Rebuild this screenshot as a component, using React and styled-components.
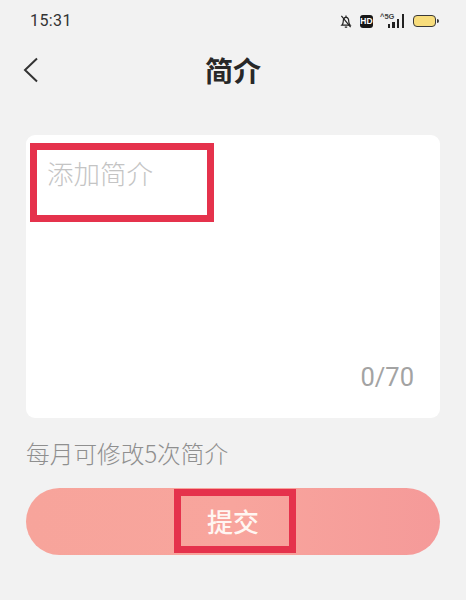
import styled, { createGlobalStyle } from 'styled-components';

const CJK = `"Noto Sans CJK SC", "Noto Sans", sans-serif`;

const GlobalStyle = createGlobalStyle`
  html, body {
    margin: 0;
    background: #f2f2f2;
    font-family: ${CJK};
  }
`;

const Page = styled.div`
  width: 466px;
  height: 600px;
  overflow: hidden;
  background: #f2f2f2;
  display: flex;
  flex-direction: column;
`;

const StatusBar = styled.div`
  height: 40px;
  padding: 0 28px 0 30px;
  display: flex;
  align-items: center;
  justify-content: space-between;
  box-sizing: border-box;
`;

const Clock = styled.span`
  font-family: Roboto, sans-serif;
  font-size: 16px;
  letter-spacing: 0.4px;
  color: #333;
`;

const StatusIcons = styled.div`
  display: flex;
  align-items: center;
  gap: 7px;
  padding-top: 2px;
`;

const HdBadge = styled.span`
  width: 13px;
  height: 13px;
  border-radius: 3px;
  background: #161616;
  color: #fff;
  font: 700 8.5px/13px "Liberation Sans", sans-serif;
  text-align: center;
`;

const Signal = styled.div`
  position: relative;
  width: 24px;
  height: 14px;
  display: flex;
  justify-content: flex-end;
  align-items: flex-end;
  gap: 2.5px;
`;

const SignalLabel = styled.span`
  position: absolute;
  left: 0;
  top: -1px;
  font: 700 7.5px/8px "Liberation Sans", sans-serif;
  color: #444;
`;

const SignalBar = styled.i`
  display: block;
  width: 2.2px;
  height: ${(p) => p.$h}px;
  background: #222;
`;

const Battery = styled.div`
  position: relative;
  width: 23px;
  height: 12px;
  margin-left: 2px;
  margin-right: 2px;
  box-sizing: border-box;
  border: 1.3px solid #3a3a3a;
  border-radius: 4px;
  background: #f8dd7c;
  &::after {
    content: '';
    position: absolute;
    right: -3.5px;
    top: 2.5px;
    width: 2px;
    height: 4.5px;
    border-radius: 0 2px 2px 0;
    background: #3a3a3a;
  }
`;

const Header = styled.div`
  height: 60px;
  position: relative;
  display: flex;
  align-items: center;
  justify-content: center;
`;

const BackButton = styled.button`
  position: absolute;
  left: 23px;
  top: 17px;
  padding: 0;
  border: 0;
  background: none;
  display: flex;
`;

const Title = styled.h1`
  margin: 0;
  font-size: 28px;
  font-weight: 700;
  line-height: 40px;
  color: #282828;
`;

const Content = styled.div`
  padding: 35px 26px 0;
  display: flex;
  flex-direction: column;
`;

const Card = styled.div`
  position: relative;
  height: 283px;
  border-radius: 9px;
  background: #fff;
  padding: 18px 21px 23px;
  box-sizing: border-box;
  display: flex;
  flex-direction: column;
  justify-content: space-between;
`;

const Placeholder = styled.div`
  font-size: 26.5px;
  line-height: 40px;
  font-weight: 300;
  color: #c4c4c4;
`;

const Counter = styled.div`
  align-self: flex-end;
  margin-right: 5px;
  font-family: Roboto, sans-serif;
  font-size: 25.5px;
  line-height: 36px;
  color: #a3a3a3;
`;

const Hint = styled.div`
  margin-top: 16px;
  margin-bottom: 2px;
  font-size: 23.7px;
  line-height: 38px;
  font-weight: 300;
  color: #8f8f8f;
`;

const Submit = styled.button`
  position: relative;
  margin-top: 14px;
  height: 67px;
  padding: 0 0 2px;
  border: 0;
  border-radius: 34px;
  background: linear-gradient(90deg, #f7a49b 0%, #f8a59d 50%, #f59a99 100%);
  color: #fff6f2;
  font-family: ${CJK};
  font-size: 26px;
  font-weight: 500;
`;

const Highlight = styled.div`
  position: absolute;
  border: 7.5px solid #e5324c;
  box-sizing: border-box;
  left: ${(p) => p.$left}px;
  top: ${(p) => p.$top}px;
  width: ${(p) => p.$width}px;
  height: ${(p) => p.$height}px;
`;

function BellOff() {
  return (
    <svg width="12" height="15" viewBox="0 0 13 15" fill="none" stroke="#222" strokeWidth="1.3" style={{ marginRight: 1 }}>
      <path d="M2 11.500c1-1 1.500-2 1.500-4C3.500 5 4.500 3 6.500 3s3 2 3 4.500c0 2 .5 3 1.500 4z" />
      <path d="M5.200 13.500h2.600M6.500 1v2M1.500 1.500l10 12" />
    </svg>
  );
}

function BackIcon() {
  return (
    <svg width="16" height="26" viewBox="0 0 16 26" fill="none" stroke="#333" strokeWidth="2">
      <path d="M14 1.500 2 13l12 11.500" />
    </svg>
  );
}

export default function App() {
  return (
    <Page>
      <GlobalStyle />
      <StatusBar>
        <Clock>15:31</Clock>
        <StatusIcons>
          <BellOff />
          <HdBadge>HD</HdBadge>
          <Signal>
            <SignalLabel>^5G</SignalLabel>
            <SignalBar $h={4} />
            <SignalBar $h={6} />
            <SignalBar $h={9} />
            <SignalBar $h={14} />
          </Signal>
          <Battery />
        </StatusIcons>
      </StatusBar>
      <Header>
        <BackButton aria-label="返回">
          <BackIcon />
        </BackButton>
        <Title>简介</Title>
      </Header>
      <Content>
        <Card>
          <Placeholder>添加简介</Placeholder>
          <Counter>0/70</Counter>
          <Highlight $left={4} $top={8} $width={184} $height={79} />
        </Card>
        <Hint>每月可修改5次简介</Hint>
        <Submit>
          提交
          <Highlight $left={148} $top={1} $width={122} $height={64} />
        </Submit>
      </Content>
    </Page>
  );
}
